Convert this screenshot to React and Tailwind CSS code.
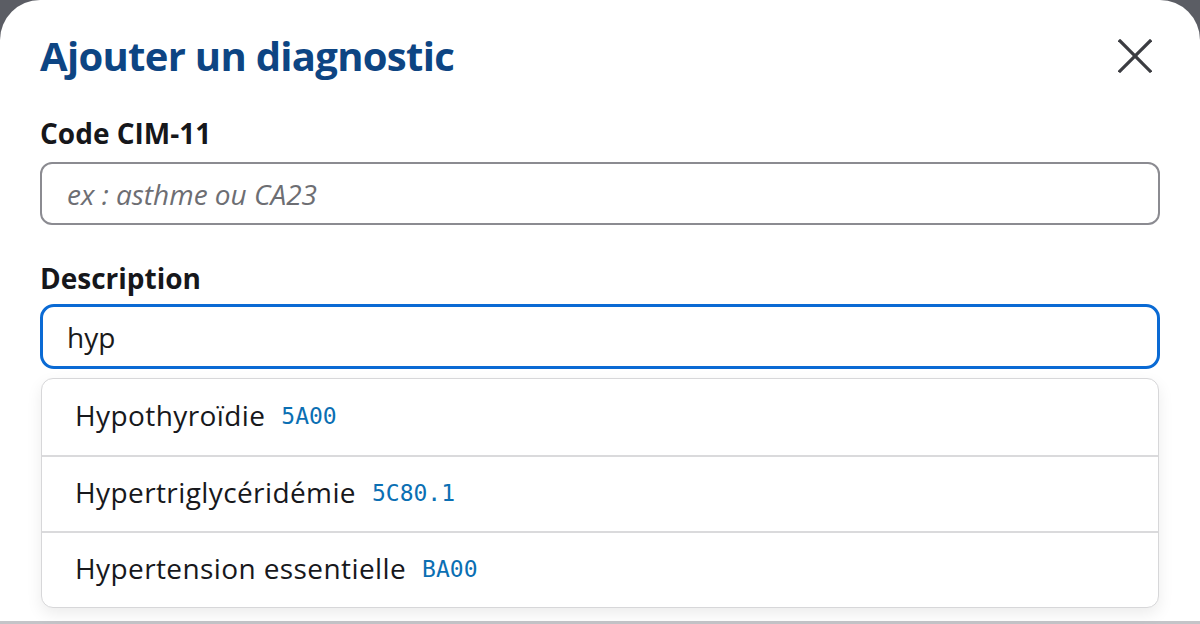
import { useState } from "react"

const suggestions = [
  { label: "Hypothyroïdie", code: "5A00" },
  { label: "Hypertriglycéridémie", code: "5C80.1" },
  { label: "Hypertension essentielle", code: "BA00" },
]

export default function App() {
  const [query, setQuery] = useState("hyp")

  return (
    <div className="h-[624px] w-[1200px] overflow-hidden bg-[#5b5d64] font-['Open_Sans',sans-serif]">
      <div className="relative flex h-[621px] flex-col rounded-t-[40px] bg-white px-10 pt-[28px]">
        <div className="flex h-[56px] items-center justify-between">
          <h1 className="text-[40px] font-bold leading-[56px] tracking-[-0.7px] text-[#0d4583]">Ajouter un diagnostic</h1>
          <button className="mr-[8px] text-[#3b3c41]" aria-label="Fermer">
            <svg width="34" height="34" viewBox="0 0 34 34" fill="none" stroke="currentColor" strokeWidth="3.2" strokeLinecap="square">
              <line x1="2" y1="2" x2="32" y2="32" />
              <line x1="32" y1="2" x2="2" y2="32" />
            </svg>
          </button>
        </div>

        <label className="mt-[30px] text-[28px] font-bold leading-[38px] text-[#16171b]">Code CIM-11</label>
        <input
          className="mt-[10px] h-[63px] w-full rounded-[12px] border-2 border-[#8b8b91] px-[25px] text-[28px] text-[#1a1a1a] outline-none placeholder:italic placeholder:text-[#6d6e73]"
          placeholder="ex : asthme ou CA23"
        />

        <label className="mt-[34px] text-[28px] font-bold leading-[38px] text-[#16171b]">Description</label>
        <input
          className="mt-[7px] h-[65px] w-full rounded-[14px] border-[3px] border-[#0a6ad4] px-[24px] text-[28px] text-[#1a1a1a] outline-none"
          value={query}
          onChange={e => setQuery(e.target.value)}
        />

        <ul className="mx-px mt-[9px] overflow-hidden rounded-[12px] border border-[#d7d7d9] bg-white shadow-[0_6px_16px_rgba(0,0,0,0.08)]">
          {suggestions.map((s, i) => (
            <li
              key={s.code}
              className={`flex h-[76px] items-center gap-[16px] px-[33px] pb-[4px] ${i > 0 ? "border-t-2 border-[#dadadc]" : ""}`}
            >
              <span className="text-[28px] tracking-[0.4px] text-[#17181c]">{s.label}</span>
              <span className="pt-[2px] font-['DejaVu_Sans_Mono',monospace] text-[23px] text-[#0b6fb3]">{s.code}</span>
            </li>
          ))}
        </ul>
      </div>
      <div className="h-[3px] bg-[#c4c4c8]" />
    </div>
  )
}
